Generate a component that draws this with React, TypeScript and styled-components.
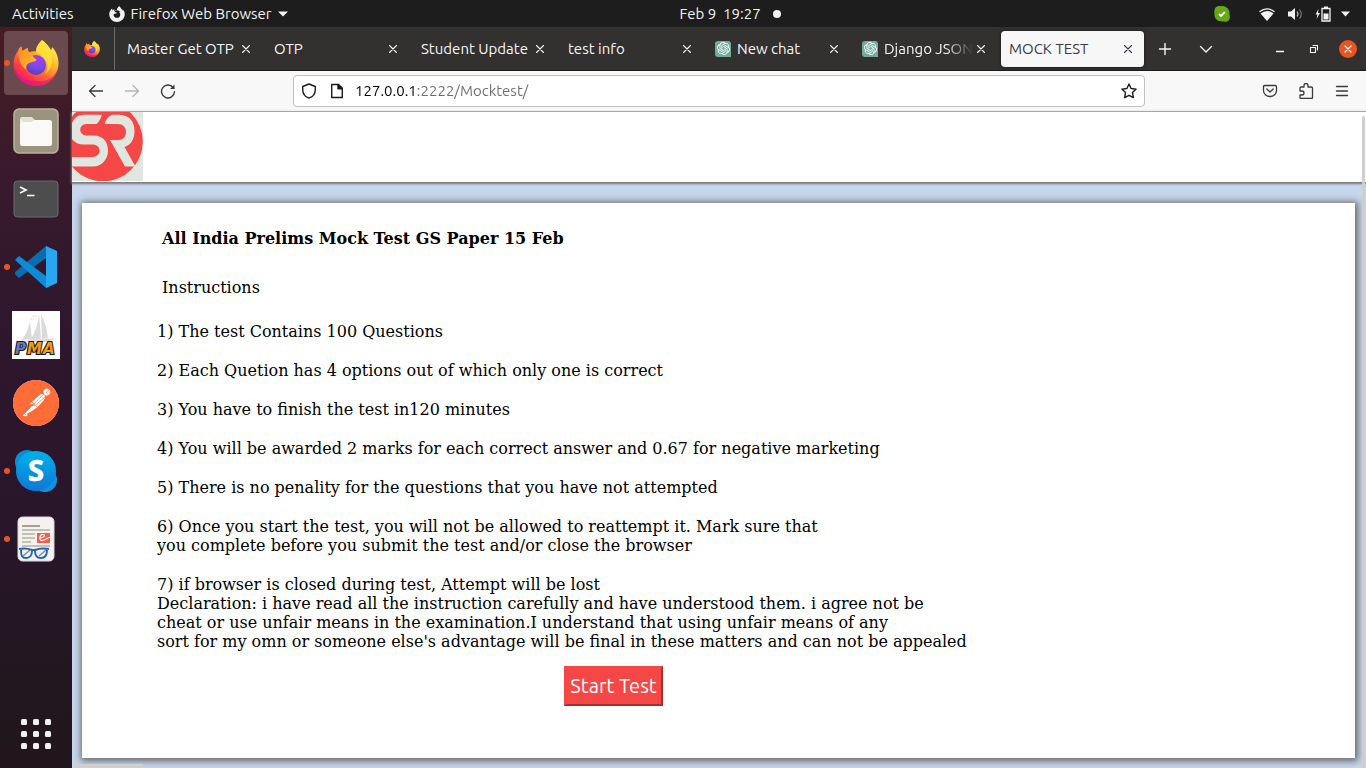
import React from "react";
import styled, { createGlobalStyle, css } from "styled-components";
import { SiFirefoxbrowser, SiOpenai, SiPostman } from "react-icons/si";

const uiFont = `Ubuntu, "Noto Sans", sans-serif`;

const GlobalStyle = createGlobalStyle`
  *, *::before, *::after { box-sizing: border-box; }
  body { margin: 0; background: #1d1d1d; }
  button, input { font: inherit; color: inherit; }
  h1, h2, p, ol { margin: 0; padding: 0; font: inherit; }
  svg { display: block; flex: none; }
`;

const Desktop = styled.div`
  min-height: 100vh;
  display: flex;
  flex-direction: column;
  font-family: ${uiFont};
  font-size: 15px;
`;

/* ---------- top bar ---------- */

const TopBar = styled.header`
  height: 27px;
  display: grid;
  grid-template-columns: 1fr auto 1fr;
  align-items: center;
  padding: 0 16px 0 12px;
  background: #1d1d1d;
  color: #f2f2f2;
`;

const TopGroup = styled.div<{ $end?: boolean; $gap: number }>`
  display: flex;
  align-items: center;
  gap: ${(p) => p.$gap}px;
  justify-content: ${(p) => (p.$end ? "flex-end" : "flex-start")};
`;

const PlainButton = styled.button`
  display: flex;
  align-items: center;
  gap: 6px;
  padding: 0;
  border: 0;
  background: none;
  line-height: 20px;
  white-space: pre;
`;

const Clock = styled(PlainButton)`
  gap: 12px;
  padding-left: 98px;
`;

const NoticeDot = styled.span`
  width: 8px;
  height: 8px;
  border-radius: 50%;
  background: #f2f2f2;
`;

/* ---------- dock ---------- */

const Workspace = styled.div`
  flex: 1;
  display: flex;
`;

const Dock = styled.nav`
  flex: none;
  width: 72px;
  padding: 2px 0 0;
  display: flex;
  flex-direction: column;
  background: linear-gradient(#451d22 0%, #3a1a2b 18%, #2f172d 38%, #29162a 68%, #221720 86%, #22161c 100%);
`;

const DockItem = styled.button<{ $active?: boolean; $running?: boolean }>`
  position: relative;
  width: 64px;
  height: 64px;
  margin: 2px 4px;
  padding: 0;
  border: 0;
  border-radius: 4px;
  display: grid;
  place-items: center;
  background: ${(p) => (p.$active ? "#6a4a4e" : "transparent")};
  ${(p) =>
    p.$running &&
    css`
      &::before {
        content: "";
        position: absolute;
        left: 0;
        top: 29px;
        width: 6px;
        height: 6px;
        border-radius: 50%;
        background: #e95420;
      }
    `}
`;

const AppsButton = styled(DockItem)`
  margin-top: auto;
`;

/* ---------- browser chrome ---------- */

const Browser = styled.div`
  flex: 1;
  min-width: 0;
  display: flex;
  flex-direction: column;
`;

const TabStrip = styled.div`
  height: 44px;
  display: flex;
  align-items: center;
  background: #333030;
  border-bottom: 1px solid #1c1b1b;
  color: #f7f7f7;
`;

const PinnedTab = styled.button`
  align-self: stretch;
  width: 43px;
  padding: 0 3px 0 0;
  margin-right: 4px;
  border: 0;
  border-right: 1px solid #6b6969;
  background: none;
  display: grid;
  place-items: center;
`;

const Tab = styled.div<{ $selected?: boolean }>`
  flex: 0 1 143px;
  min-width: 0;
  height: 36px;
  padding: 0 8px;
  display: flex;
  align-items: center;
  border-radius: 4px;
  ${(p) =>
    p.$selected &&
    css`
      background: #f7f7f7;
      color: #3d3846;
      box-shadow: 0 0 3px #111;
    `}
`;

const Tabs = styled.div`
  flex: 0 1 1025px;
  min-width: 0;
  display: flex;
  gap: 4px;
`;

const TabLabel = styled.button`
  flex: 1;
  min-width: 0;
  padding: 0;
  border: 0;
  background: none;
  display: flex;
  align-items: center;
  gap: 6px;
  overflow: hidden;
  text-align: left;
  white-space: nowrap;
  line-height: 20px;
  mask-image: linear-gradient(to left, transparent 0, #000 28px);
`;

const FullTabLabel = styled(TabLabel)`
  mask-image: none;
`;

const ChatIcon = styled.span`
  flex: none;
  width: 16px;
  height: 16px;
  border-radius: 3px 3px 0 3px;
  display: grid;
  place-items: center;
  background: #74aa9c;
  color: #fff;
`;

const IconButton = styled.button<{ $size: number }>`
  flex: none;
  width: ${(p) => p.$size}px;
  height: ${(p) => p.$size}px;
  padding: 0;
  border: 0;
  background: none;
  display: grid;
  place-items: center;

  &:disabled {
    color: #b4b4b4;
  }
`;

const TabTools = styled.div`
  display: flex;
  gap: 5px;
  margin-left: 3px;
`;

const WindowTools = styled.div`
  margin-left: auto;
  margin-right: 9px;
  display: flex;
  align-items: center;
  gap: 16px;
`;

const CloseWindow = styled(IconButton)`
  border-radius: 50%;
  background: #e95420;
`;

const Toolbar = styled.div`
  height: 41px;
  padding: 0 6px;
  display: flex;
  align-items: center;
  background: #f8f8f8;
  border-bottom: 1px solid #bfbfbf;
  color: #3a3a3a;
`;

const Spacer = styled.span`
  flex: 0 1 107px;
`;

const AddressBar = styled.label`
  flex: 1;
  min-width: 0;
  height: 32px;
  padding: 0 7px;
  display: flex;
  align-items: center;
  gap: 12px;
  border: 1px solid #bfbfbf;
  border-radius: 4px;
  background: #fff;
  color: #1a1a1a;
`;

/* The host part of the address is dark, the rest is dimmed. */
const AddressInput = styled.input`
  flex: 1;
  min-width: 0;
  padding: 0;
  margin-left: -2px;
  border: 0;
  outline: 0;
  line-height: 22px;
  background: linear-gradient(90deg, #000 63px, #6c6c6c 63px);
  background-clip: text;
  color: transparent;
`;

/* ---------- page ---------- */

const Page = styled.div`
  position: relative;
  flex: 1;
  display: flex;
  flex-direction: column;
  background: #c7d6ec;
  color: #000;
  font-family: "DejaVu Serif", serif;
  font-size: 16px;
  line-height: 19px;
`;

const SiteHeader = styled.header`
  height: 70px;
  background: #fff;
  box-shadow: 0 1px 2px 1px #777;
`;

const Card = styled.main`
  flex: 1;
  margin: 21px 11px 10px 10px;
  padding: 26px 75px 52px;
  background: #fff;
  box-shadow: 1px 1px 7px 2px #666;
`;

const Heading = styled.h1`
  padding-left: 5px;
  font-weight: bold;
`;

const SubHeading = styled.h2`
  margin-top: 30px;
  padding-left: 5px;
`;

const Instructions = styled.div`
  max-width: 913px;
  margin-top: 25px;
  display: flex;
  flex-direction: column;
  gap: 20px;
`;

const StartRow = styled.div`
  max-width: 913px;
  margin-top: 15px;
  display: flex;
  justify-content: center;
`;

const StartButton = styled.button`
  height: 40px;
  padding: 0 4px;
  border: 2px solid;
  border-color: #f64747 #a63030 #a63030 #f64747;
  background: #f64747;
  color: #fff;
  font-family: ${uiFont};
  font-size: 20px;
  line-height: 24px;
`;

const VerticalThumb = styled.span`
  position: absolute;
  top: 4px;
  right: 1px;
  bottom: 0;
  width: 3px;
  background: #cfcfd2;
  border-radius: 2px 2px 0 0;
`;

const HorizontalThumb = styled.span`
  position: absolute;
  left: 2px;
  bottom: 0;
  width: 69px;
  height: 4px;
  background: #cfcfd2;
`;

/* ---------- drawings ---------- */

const FirefoxLogo = ({ size, id }: { size: number; id: string }) => (
  <svg width={size} height={size} viewBox="0 0 46 46">
    <defs>
      <linearGradient id={`${id}a`} x1="0.85" y1="0.1" x2="0.2" y2="0.95">
        <stop offset="0" stopColor="#fff44f" />
        <stop offset="0.3" stopColor="#ffb82b" />
        <stop offset="0.58" stopColor="#ff6a33" />
        <stop offset="0.8" stopColor="#ff3647" />
        <stop offset="1" stopColor="#e31587" />
      </linearGradient>
      <radialGradient id={`${id}b`} cx="0.6" cy="0.25" r="0.8">
        <stop offset="0" stopColor="#a43bf0" />
        <stop offset="0.5" stopColor="#7a4be8" />
        <stop offset="1" stopColor="#4b3fb8" />
      </radialGradient>
      <linearGradient id={`${id}c`} x1="0" y1="0" x2="1" y2="1">
        <stop offset="0" stopColor="#ff8a1f" />
        <stop offset="1" stopColor="#ffc12d" />
      </linearGradient>
    </defs>
    <path
      d="M29 0c4 3 7 6 9 10 1-1 1-2 1-3 4 4 6.500 10 6.500 16C45.500 36 35.500 46 23 46S.500 36 .500 24C.500 18 3 13 5.500 10.500c0-1 1-3.500 3-4 0 2 .500 3.500 1.500 4.500 2-2 3-2.500 5-3 0 1.500 0 3 1 4.500 2-1 4.500-1.500 7-1C23 7 26 3 29 0z"
      fill={`url(#${id}a)`}
    />
    <path d="M1 28c2 11 11 18 22 18 11 0 20-7 22-17-4 9-12 13-21 12C14 41 5 37 1 28z" fill="#e0108a" opacity="0.6" />
    <circle cx="23" cy="25" r="10" fill={`url(#${id}b)`} />
    <path d="M5.500 10.500c0-1 1-3.500 3-4 0 2 .500 3.500 1.500 4.500 2-2 3-2.500 5-3 0 1.500 0 3 1 4.500 3 .500 3 4 7.500 7 0 1.500-2 2-6 3-3 1-5 3-4 7-6-3-8-11-8-19z" fill={`url(#${id}c)`} />
    <path d="M29 0c5 4 9 9 10 17 1 7-2 14-7 17 3-4 3-10 1-13-2-5-8-6-10-10 0-4 3-8 6-11z" fill="#ffe63a" opacity="0.75" />
  </svg>
);

const FilesLogo = () => (
  <svg width="46" height="46" viewBox="0 0 46 46">
    <rect x="1" y="1" width="44" height="44" rx="5" fill="#9c937c" stroke="#b9b39f" strokeWidth="1.500" />
    <path d="M7 18V11q0-2 2-2h10l3 3h15v8z" fill="#e2dfd3" />
    <rect x="7" y="12" width="32" height="26" rx="2.500" fill="#faf9f8" />
    <path d="M7 16V14h11l3-2H10z" fill="#e2dfd3" />
  </svg>
);

const TerminalLogo = () => (
  <svg width="46" height="38" viewBox="0 0 46 38">
    <rect x="1" y="1" width="44" height="36" rx="3.500" fill="#4d4d4d" stroke="#6c6b6b" />
    <path d="M7 7l6 3-6 3M14 15.500h7.500" fill="none" stroke="#fff" strokeWidth="1.700" />
  </svg>
);

const CodeLogo = () => (
  <svg width="44" height="44" viewBox="0 0 44 44">
    <path d="M32 1v12L5 33l-4-4v-2z" fill="#0b6cb0" />
    <path d="M1 15l4-4 27 20v12z" fill="#0f8ad6" />
    <path d="M32 1l11 5v32l-11 5z" fill="#27a7f2" />
  </svg>
);

const PmaLogo = () => (
  <svg width="48" height="48" viewBox="0 0 48 48">
    <rect width="48" height="48" fill="#fff" />
    <path d="M10 29c4-6 7-12 8-19l2 18zM18 29c5-7 8-16 9-26l2 25zM29 3c4 8 6 16 7 24l-6 1zM8 30l36-3-8 4H10z" fill="#dadada" />
    <path d="M20 5h5M18 8h4" stroke="#ddd" strokeWidth="0.800" />
    <g fontFamily="DejaVu Sans, sans-serif" fontWeight="bold" fontStyle="italic" fontSize="15" stroke="#1a1a1a" strokeWidth="2.200" paintOrder="stroke">
      <text x="3" y="43" fill="#6c78af">P</text>
      <text x="15" y="43" fill="#f89c0e">M</text>
      <text x="31" y="43" fill="#f89c0e">A</text>
    </g>
  </svg>
);

const PostmanMark = styled.span`
  display: grid;
  border-radius: 50%;
  background: #fff;
  color: #ff6c37;
`;

const SkypeLogo = () => (
  <svg width="44" height="44" viewBox="0 0 44 44">
    <defs>
      <linearGradient id="skype" x1="0" y1="0" x2="0" y2="1">
        <stop offset="0" stopColor="#00b1ec" />
        <stop offset="1" stopColor="#0f78d4" />
      </linearGradient>
    </defs>
    <circle cx="13" cy="13" r="12" fill="#0a8fd0" />
    <circle cx="31" cy="31" r="12" fill="#1292dc" />
    <circle cx="22" cy="22" r="20" fill="url(#skype)" />
    <text x="22" y="32" textAnchor="middle" fill="#fff" stroke="#fff" strokeWidth="0.600" fontFamily="Open Sans, Noto Sans, sans-serif" fontWeight="bold" fontSize="29">S</text>
  </svg>
);

const ReaderLogo = () => (
  <svg width="38" height="46" viewBox="0 0 38 46">
    <rect x="1" y="1" width="36" height="44" rx="4.500" fill="#f3f2f0" stroke="#d8d7d4" />
    <path d="M5 14h28M5 18h13M5 22h13M5 26h9M5 30h28" stroke="#c5c1b1" strokeWidth="2" />
    <path d="M5 10h18" stroke="#aaa18a" strokeWidth="2" />
    <rect x="20" y="17" width="13" height="10" fill="#f15d50" />
    <path d="M23 22c4 0 6-3 3-3.500s-5 6-1 6 5-3 8-3" fill="none" stroke="#fff" strokeWidth="1.200" />
    <path d="M6 40l7-6M22 40l7-6" stroke="#8c8c8c" strokeWidth="1.500" />
    <path d="M2 33q7-1.500 13 1h3q6-2.500 14-1M4 34c0 6 1 8 5 8s6-3 6-7M18 35c0 5 2 7 6 7s6-3 6-8" fill="none" stroke="#2264b0" strokeWidth="1.900" />
  </svg>
);

const AppGrid = () => (
  <svg width="30" height="30" viewBox="0 0 30 30" fill="#f2f1f0">
    {[0, 12, 24].map((y) => [0, 12, 24].map((x) => <rect key={`${x}-${y}`} x={x} y={y} width="6" height="6" rx="1.500" />))}
  </svg>
);

const SiteLogo = () => (
  <svg width="71" height="69" viewBox="0 0 71 69" role="img" aria-label="SR">
    <rect width="71" height="69" fill="#e1e6e1" />
    <circle cx="31" cy="29.500" r="39.800" fill="#f64747" />
    <path d="M30 2.700Q28 9 24.500 12H14A5.800 5.700 0 0 0 14 23.500H22C31 23.500 36 30 36 38.500S30 54.500 21 54.500H0V45H20C25 45 27.500 42 27.500 38.500S25 32.500 20 32.500H12Q4 32.500 0 27V11Q3 2.700 12 2.700z" fill="#e1e6e1" />
    <path d="M40 2.700H47C57 2.700 62.500 9 62.500 19C62.500 27 59 33 52.500 35L62 52L64 54.500H53L38 28H46C51 28 54 24.500 54 20S51 12 46 12H32.500Q34 5 40 2.700z" fill="#e1e6e1" />
  </svg>
);

const Line = ({ size, d, width = 1.3, fill = "none" }: { size: number; d: string; width?: number; fill?: string }) => (
  <svg width={size} height={size} viewBox={`0 0 ${size} ${size}`} fill={fill} stroke="currentColor" strokeWidth={width} strokeLinecap="round" strokeLinejoin="round">
    <path d={d} />
  </svg>
);

const Caret = () => (
  <svg width="10" height="6" viewBox="0 0 10 6" fill="#f2f2f2">
    <path d="M0 .500h10L5 5.500z" />
  </svg>
);

const Cross = () => <Line size={16} width={1.1} d="M4.500 4.500l7 7M11.500 4.500l-7 7" />;

const SystemStatus = () => (
  <PlainButton aria-label="System menu">
    <svg width="94" height="18" viewBox="0 0 94 18" fill="#f2f2f2">
      <path d="M4.500 8.500Q11 3.500 17.500 8.500L11 16z" />
      <path d="M3.500 6.800Q11 1 18.500 6.800" fill="none" stroke="#f2f2f2" strokeWidth="1.300" />
      <path d="M32 6.500h3L39 3v12l-4-3.500h-3z" />
      <path d="M41 6.500q2 2.500 0 5" fill="none" stroke="#bbb" strokeWidth="1.200" />
      <path d="M43.500 4.500q3.500 4.500 0 9" fill="none" stroke="#777" strokeWidth="1.200" />
      <path d="M62.500 4L59.500 9.500h2L60.500 14l3.500-6h-2z" />
      <path d="M66 3.500h8v12.500h-8z" fill="none" stroke="#f2f2f2" strokeWidth="1.300" />
      <path d="M68 1.500h4v2h-4zM67.500 8.500h5v6h-5z" />
      <path d="M85 6.500h9L89.500 11.500z" />
    </svg>
  </PlainButton>
);

const SkypeStatus = () => (
  <svg width="16" height="16" viewBox="0 0 16 16">
    <path d="M5 0c7-1 11 3 10.500 8.500C17 13 14 17 10 15.500 4 16 0 13 .500 8-.500 3 2 0 5 0z" fill="#65a816" />
    <path d="M5 8l2 2 4-4" fill="none" stroke="#fff" strokeWidth="1.800" />
  </svg>
);

/* ---------- data ---------- */

const tabs: { title: string; chat?: boolean; fade?: boolean; selected?: boolean }[] = [
  { title: "Master Get OTP" },
  { title: "OTP" },
  { title: "Student Update" },
  { title: "test info" },
  { title: "New chat", chat: true },
  { title: "Django JSONF", chat: true, fade: true },
  { title: "MOCK TEST", selected: true },
];

const dockApps = [
  { name: "Firefox", icon: <FirefoxLogo size={46} id="dock" />, active: true, running: true },
  { name: "Files", icon: <FilesLogo /> },
  { name: "Terminal", icon: <TerminalLogo /> },
  { name: "Visual Studio Code", icon: <CodeLogo />, running: true },
  { name: "phpMyAdmin", icon: <PmaLogo /> },
  { name: "Postman", icon: <PostmanMark><SiPostman size={46} /></PostmanMark> },
  { name: "Skype", icon: <SkypeLogo />, running: true },
  { name: "Document Viewer", icon: <ReaderLogo />, running: true },
];

const instructions: string[][] = [
  ["1) The test Contains 100 Questions"],
  ["2) Each Quetion has 4 options out of which only one is correct"],
  ["3) You have to finish the test in120 minutes"],
  ["4) You will be awarded 2 marks for each correct answer and 0.67 for negative marketing"],
  ["5) There is no penality for the questions that you have not attempted"],
  [
    "6) Once you start the test, you will not be allowed to reattempt it. Mark sure that",
    "you complete before you submit the test and/or close the browser",
  ],
  [
    "7) if browser is closed during test, Attempt will be lost",
    "Declaration: i have read all the instruction carefully and have understood them. i agree not be",
    "cheat or use unfair means in the examination.I understand that using unfair means of any",
    "sort for my omn or someone else's advantage will be final in these matters and can not be appealed",
  ],
];

export default function App() {
  return (
    <Desktop>
      <GlobalStyle />
      <TopBar>
        <TopGroup $gap={35}>
          <PlainButton>Activities</PlainButton>
          <PlainButton>
            <SiFirefoxbrowser size={16} />
            Firefox Web Browser
            <Caret />
          </PlainButton>
        </TopGroup>
        <Clock>
          {"Feb 9  19:27"}
          <NoticeDot />
        </Clock>
        <TopGroup $end $gap={26}>
          <SkypeStatus />
          <SystemStatus />
        </TopGroup>
      </TopBar>
      <Workspace>
        <Dock aria-label="Dock">
          {dockApps.map((app) => (
            <DockItem key={app.name} aria-label={app.name} $active={app.active} $running={app.running}>
              {app.icon}
            </DockItem>
          ))}
          <AppsButton aria-label="Show applications">
            <AppGrid />
          </AppsButton>
        </Dock>
        <Browser>
          <TabStrip>
            <PinnedTab aria-label="Pinned tab">
              <FirefoxLogo size={16} id="pin" />
            </PinnedTab>
            <Tabs>
              {tabs.map((tab) => {
                const Label = tab.fade ? TabLabel : FullTabLabel;
                return (
                  <Tab key={tab.title} $selected={tab.selected}>
                    <Label>
                      {tab.chat && (
                        <ChatIcon>
                          <SiOpenai size={13} />
                        </ChatIcon>
                      )}
                      <span>{tab.title}</span>
                    </Label>
                    <IconButton $size={16} aria-label={`Close ${tab.title}`}>
                      <Cross />
                    </IconButton>
                  </Tab>
                );
              })}
            </Tabs>
            <TabTools>
              <IconButton $size={36} aria-label="New tab">
                <Line size={16} width={1.4} d="M8 2.500v11M2.500 8h11" />
              </IconButton>
              <IconButton $size={36} aria-label="List all tabs">
                <Line size={16} width={1.4} d="M2.500 5.500L8 11l5.500-5.500" />
              </IconButton>
            </TabTools>
            <WindowTools>
              <IconButton $size={18} aria-label="Minimize">
                <Line size={16} d="M4.500 10.500h7" />
              </IconButton>
              <IconButton $size={18} aria-label="Restore">
                <Line size={16} width={1.1} d="M4.500 6.500h5v5h-5zM7 4.500h4.500V9" />
              </IconButton>
              <CloseWindow $size={18} aria-label="Close window">
                <Line size={16} width={1.4} d="M5 5l6 6M11 5l-6 6" />
              </CloseWindow>
            </WindowTools>
          </TabStrip>
          <Toolbar>
            <IconButton $size={36} aria-label="Back">
              <Line size={16} d="M14.500 8h-13M7 2.500L1.500 8L7 13.500" />
            </IconButton>
            <IconButton $size={36} aria-label="Forward" disabled>
              <Line size={16} d="M1.500 8h13M9 2.500L14.500 8L9 13.500" />
            </IconButton>
            <IconButton $size={36} aria-label="Reload">
              <svg width="16" height="16" viewBox="0 0 16 16" fill="none" stroke="currentColor" strokeWidth="1.400" strokeLinecap="round">
                <path d="M13.500 5A6.500 6.500 0 1 0 14.500 8.800" />
                <path d="M14.500 1.500v4.500H10z" fill="currentColor" stroke="none" />
              </svg>
            </IconButton>
            <Spacer />
            <AddressBar>
              <Line size={16} width={1.4} d="M8 1L14.300 3.500V6.500C14.300 11 11.500 14 8 15.200C4.500 14 1.700 11 1.700 6.500V3.500z" />
              <svg width="16" height="16" viewBox="0 0 16 16" fill="none" stroke="currentColor" strokeWidth="1.400" strokeLinejoin="round">
                <path d="M2.700 1.500h6.800L13.300 5.300V14.500H2.700z" />
                <path d="M9 1.500v4.300h4.300z" fill="currentColor" />
              </svg>
              <AddressInput aria-label="Address" defaultValue="127.0.0.1:2222/Mocktest/" spellCheck={false} />
              <Line size={16} width={1.4} d="M8 1l2.100 4.500 5 .600-3.600 3.500.900 5L8 12.300 3.600 14.600l.900-5L.900 6.100l5-.600z" />
            </AddressBar>
            <Spacer />
            <IconButton $size={36} aria-label="Save to Pocket">
              <Line size={16} d="M2.800 2.500h10.400q1.300 0 1.300 1.300V7.500a6.500 6 0 0 1-13 0V3.800q0-1.300 1.300-1.300zM4.800 6l3.200 3 3.200-3" />
            </IconButton>
            <IconButton $size={36} aria-label="Extensions">
              <Line size={16} d="M2 6V5q0-1 1-1H6V2.500a2 2 0 0 1 4 0V4h3.500q1 0 1 1V14.500q0 1-1 1H3q-1 0-1-1V12H4a1.500 1.500 0 0 0 0-4H2z" />
            </IconButton>
            <IconButton $size={36} aria-label="Menu">
              <Line size={16} d="M2.500 3.500h11M2.500 8h11M2.500 12.500h11" />
            </IconButton>
          </Toolbar>
          <Page>
            <SiteHeader>
              <SiteLogo />
            </SiteHeader>
            <Card>
              <Heading>All India Prelims Mock Test GS Paper 15 Feb</Heading>
              <SubHeading>Instructions</SubHeading>
              <Instructions>
                {instructions.map((lines) => (
                  <p key={lines[0]}>
                    {lines.map((line, i) => (
                      <React.Fragment key={line}>
                        {i > 0 && <br />}
                        {line}
                      </React.Fragment>
                    ))}
                  </p>
                ))}
              </Instructions>
              <StartRow>
                <StartButton>Start Test</StartButton>
              </StartRow>
            </Card>
            <VerticalThumb />
            <HorizontalThumb />
          </Page>
        </Browser>
      </Workspace>
    </Desktop>
  );
}
